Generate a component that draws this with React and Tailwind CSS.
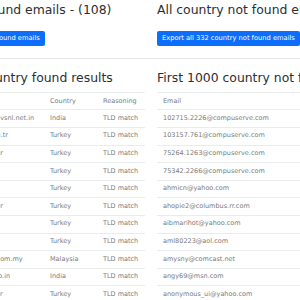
import React from "react";

const font = { fontFamily: '"DejaVu Sans", sans-serif' };

const foundRows = [
  ["rajesh.kumar.sharma1@vsnl.net.in", "India"],
  ["ayse.demirci@ttnet.com.tr", "Turkey"],
  ["cem.kaya@mynet.com.tr", "Turkey"],
  ["ali@ttnet.net.tr", "Turkey"],
  ["b.ozturk@mail.tr", "Turkey"],
  ["ekin.kaya@mynet.com.tr", "Turkey"],
  ["cem@superonline.tr", "Turkey"],
  ["deniz@ttmail.tr", "Turkey"],
  ["farid.hasan@streamyx.com.my", "Malaysia"],
  ["gaurav.mehta@yahoo.co.in", "India"],
  ["hakan.sahin@ttnet.net.tr", "Turkey"],
  ["hulya@mynet.com.tr", "Turkey"],
];

const notFoundRows = [
  "102715.2226@compuserve.com",
  "103157.761@compuserve.com",
  "75264.1263@compuserve.com",
  "75342.2266@compuserve.com",
  "ahmicn@yahoo.com",
  "ahopie2@columbus.rr.com",
  "aibmarihot@yahoo.com",
  "aml80223@aol.com",
  "amysny@comcast.net",
  "angy69@msn.com",
  "anonymous_ui@yahoo.com",
  "apfel@earthlink.net",
];

function Heading({ children, className }) {
  return (
    <h3 className={"text-[12.4px] leading-[1.2] text-[#2b2f33] whitespace-nowrap " + (className || "")}>
      {children}
    </h3>
  );
}

function ExportButton({ children }) {
  return (
    <button className="mt-[13px] h-[15px] px-[5px] rounded-[2px] bg-[#0d6efd] text-white text-[6.7px] leading-none whitespace-nowrap">
      {children}
    </button>
  );
}

export default function App() {
  return (
    <div className="w-[300px] h-[300px] overflow-hidden bg-white" style={font}>
      <div className="-ml-[85px] w-[472px]">
        <div className="flex gap-[12px]">
          <div className="w-[230px] shrink-0 pt-[3px]">
            <Heading>All country found emails - (108)</Heading>
            <ExportButton>Export all 108 country found emails</ExportButton>
          </div>
          <div className="w-[230px] shrink-0 pt-[3px]">
            <Heading>All country not found emails - (332)</Heading>
            <ExportButton>Export all 332 country not found emails</ExportButton>
          </div>
        </div>

        <div className="mt-[11px] border-t border-[#e5e5e5]" />

        <div className="flex gap-[12px] mt-[12px]">
          <div className="w-[230px] shrink-0">
            <Heading>First 1000 country found results</Heading>
            <table className="mt-[6.5px] w-full table-fixed border-collapse text-[6.5px] text-[#7a7a7a]">
              <colgroup>
                <col className="w-[129px]" />
                <col className="w-[53px]" />
                <col className="w-[48px]" />
              </colgroup>
              <thead>
                <tr className="h-[17px] border-y border-[#e9ecef]">
                  <th className="px-[6px] text-left font-normal">Email</th>
                  <th className="px-[6px] text-left font-normal">Country</th>
                  <th className="px-[6px] text-left font-normal">Reasoning</th>
                </tr>
              </thead>
              <tbody>
                {foundRows.map(([email, country]) => (
                  <tr key={email} className="h-[17.6px] border-b border-[#e9ecef]">
                    <td className="px-[6px] whitespace-nowrap overflow-hidden">{email}</td>
                    <td className="px-[6px] whitespace-nowrap">{country}</td>
                    <td className="px-[6px] whitespace-nowrap">TLD match</td>
                  </tr>
                ))}
              </tbody>
            </table>
          </div>
          <div className="w-[230px] shrink-0">
            <Heading>First 1000 country not found results</Heading>
            <table className="mt-[6.5px] w-full border-collapse text-[6.5px] text-[#7a7a7a]">
              <thead>
                <tr className="h-[17px] border-y border-[#e9ecef]">
                  <th className="px-[6px] text-left font-normal">Email</th>
                </tr>
              </thead>
              <tbody>
                {notFoundRows.map((email) => (
                  <tr key={email} className="h-[17.6px] border-b border-[#e9ecef]">
                    <td className="px-[6px] whitespace-nowrap">{email}</td>
                  </tr>
                ))}
              </tbody>
            </table>
          </div>
        </div>
      </div>
    </div>
  );
}
